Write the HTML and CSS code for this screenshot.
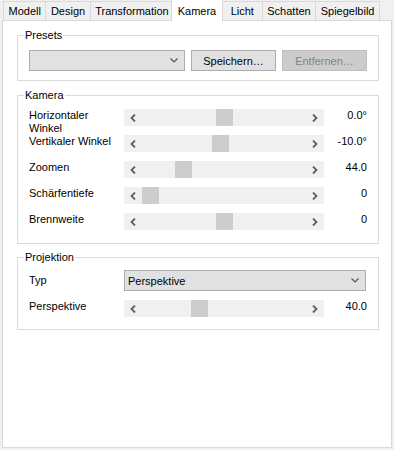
FILE: index.html
```html
<!DOCTYPE html>
<html lang="de">
<head>
  <meta charset="UTF-8">
  <meta name="viewport" content="width=device-width, initial-scale=1.0">
  <title>Kamera</title>
  <link rel="stylesheet" href="styles.css">
</head>
<body>
  <!-- Tab strip -->
  <div class="tabs">
    <div class="tab">Modell</div>
    <div class="tab">Design</div>
    <div class="tab">Transformation</div>
    <div class="tab active">Kamera</div>
    <div class="tab">Licht</div>
    <div class="tab">Schatten</div>
    <div class="tab">Spiegelbild</div>
  </div>

  <div class="panel">
    <!-- Presets -->
    <fieldset>
      <legend>Presets</legend>
      <div class="presetRow">
        <div class="combo presetCombo">
          <span></span>
          <svg class="chevron" width="8" height="5" viewBox="0 0 8 5"><polyline points="0.5,0.5 4,4 7.5,0.5" fill="none" stroke="#555" stroke-width="1.2"/></svg>
        </div>
        <button class="btn">Speichern…</button>
        <button class="btn disabled">Entfernen…</button>
      </div>
    </fieldset>

    <!-- Kamera -->
    <fieldset class="kamera">
      <legend>Kamera</legend>
      <div class="row">
        <div class="label">Horizontaler Winkel</div>
        <div class="slider">
          <svg width="6" height="8" viewBox="0 0 6 8"><polyline points="5,0.5 1.5,4 5,7.5" fill="none" stroke="#606060" stroke-width="1.8"/></svg>
          <div class="thumb" style="left: 92px"></div>
          <svg width="6" height="8" viewBox="0 0 6 8"><polyline points="1,0.5 4.5,4 1,7.5" fill="none" stroke="#606060" stroke-width="1.8"/></svg>
        </div>
        <div class="value">0.0°</div>
      </div>
      <div class="row">
        <div class="label">Vertikaler Winkel</div>
        <div class="slider">
          <svg width="6" height="8" viewBox="0 0 6 8"><polyline points="5,0.5 1.5,4 5,7.5" fill="none" stroke="#606060" stroke-width="1.8"/></svg>
          <div class="thumb" style="left: 88px"></div>
          <svg width="6" height="8" viewBox="0 0 6 8"><polyline points="1,0.5 4.5,4 1,7.5" fill="none" stroke="#606060" stroke-width="1.8"/></svg>
        </div>
        <div class="value">-10.0°</div>
      </div>
      <div class="row">
        <div class="label">Zoomen</div>
        <div class="slider">
          <svg width="6" height="8" viewBox="0 0 6 8"><polyline points="5,0.5 1.5,4 5,7.5" fill="none" stroke="#606060" stroke-width="1.8"/></svg>
          <div class="thumb" style="left: 51px"></div>
          <svg width="6" height="8" viewBox="0 0 6 8"><polyline points="1,0.5 4.5,4 1,7.5" fill="none" stroke="#606060" stroke-width="1.8"/></svg>
        </div>
        <div class="value">44.0</div>
      </div>
      <div class="row">
        <div class="label">Schärfentiefe</div>
        <div class="slider">
          <svg width="6" height="8" viewBox="0 0 6 8"><polyline points="5,0.5 1.5,4 5,7.5" fill="none" stroke="#606060" stroke-width="1.8"/></svg>
          <div class="thumb" style="left: 18px"></div>
          <svg width="6" height="8" viewBox="0 0 6 8"><polyline points="1,0.5 4.5,4 1,7.5" fill="none" stroke="#606060" stroke-width="1.8"/></svg>
        </div>
        <div class="value">0</div>
      </div>
      <div class="row">
        <div class="label">Brennweite</div>
        <div class="slider">
          <svg width="6" height="8" viewBox="0 0 6 8"><polyline points="5,0.5 1.5,4 5,7.5" fill="none" stroke="#606060" stroke-width="1.8"/></svg>
          <div class="thumb" style="left: 92px"></div>
          <svg width="6" height="8" viewBox="0 0 6 8"><polyline points="1,0.5 4.5,4 1,7.5" fill="none" stroke="#606060" stroke-width="1.8"/></svg>
        </div>
        <div class="value">0</div>
      </div>
    </fieldset>

    <!-- Projektion -->
    <fieldset class="projektion">
      <legend>Projektion</legend>
      <div class="row typRow">
        <div class="label">Typ</div>
        <div class="combo typCombo">
          <span>Perspektive</span>
          <svg class="chevron" width="8" height="5" viewBox="0 0 8 5"><polyline points="0.5,0.5 4,4 7.5,0.5" fill="none" stroke="#555" stroke-width="1.2"/></svg>
        </div>
      </div>
      <div class="row lastRow">
        <div class="label">Perspektive</div>
        <div class="slider">
          <svg width="6" height="8" viewBox="0 0 6 8"><polyline points="5,0.5 1.5,4 5,7.5" fill="none" stroke="#606060" stroke-width="1.8"/></svg>
          <div class="thumb" style="left: 67px"></div>
          <svg width="6" height="8" viewBox="0 0 6 8"><polyline points="1,0.5 4.5,4 1,7.5" fill="none" stroke="#606060" stroke-width="1.8"/></svg>
        </div>
        <div class="value">40.0</div>
      </div>
    </fieldset>
  </div>
</body>
</html>
```

FILE: styles.css
```css
body {
  margin: 0;
  background-color: #f0f0f0;
  font-family: "Liberation Sans", Arial, sans-serif;
  font-size: 11px;
  color: #000;
}


/* Tabs */
.tabs {
  display: flex;
  align-items: flex-end;
  height: 20px;
  padding-left: 3px;
}

.tab {
  position: relative;
  height: 18px;
  line-height: 18px;
  min-width: 30px;
  padding: 0 4.5px;
  margin-right: -1px;
  text-align: center;
  border: 1px solid #d9d9d9;
  border-bottom: none;
  background-color: #f0f0f0;
}

.tab.active {
  height: 21px;
  line-height: 22px;
  margin: 0 -1px -1px -2px;
  padding: 0 5.5px;
  background-color: #fff;
  z-index: 1;
}


/* Panel */
.panel {
  box-sizing: border-box;
  height: 428px;
  margin: 0 2px;
  padding: 8px 12px 0 14px;
  border: 1px solid #d9d9d9;
  background-color: #fff;
}

fieldset {
  margin: 0 0 8px;
  padding: 8px 11px 9px;
  border: 1px solid #dcdcdc;
  min-width: 0;
}

legend {
  padding: 0 1px;
  margin-left: -5px;
  line-height: 13px;
}

.kamera {
  padding-top: 7px;
  padding-bottom: 4px;
  margin-bottom: 7px;
}

.projektion {
  padding-top: 6px;
  padding-bottom: 12px;
}


/* Presets */
.presetRow {
  display: flex;
  gap: 6px;
}

.combo {
  box-sizing: border-box;
  display: flex;
  align-items: center;
  justify-content: space-between;
  height: 21px;
  padding: 0 6px 0 3px;
  border: 1px solid #adadad;
  background-color: #e1e1e1;
}

.presetCombo {
  width: 156px;
}

.typCombo {
  width: 242px;
}

.btn {
  box-sizing: border-box;
  width: 85px;
  height: 21px;
  padding: 0;
  font-family: inherit;
  font-size: 11px;
  color: #000;
  border: 1px solid #adadad;
  background-color: #e1e1e1;
}

.btn.disabled {
  color: #838383;
  border-color: #bfbfbf;
  background-color: #cccccc;
}


/* Slider rows */
.row {
  display: flex;
  align-items: flex-start;
  height: 26px;
}

.row .label {
  box-sizing: border-box;
  width: 95px;
  padding-right: 6px;
  line-height: 13px;
}

.typRow {
  height: 30px;
}

.typRow .label {
  line-height: 21px;
}

.lastRow {
  height: 17px;
}

.slider {
  position: relative;
  box-sizing: border-box;
  display: flex;
  align-items: center;
  justify-content: space-between;
  width: 200px;
  height: 17px;
  padding: 0 6px;
  background-color: #f0f0f0;
}

.thumb {
  position: absolute;
  top: 0;
  width: 17px;
  height: 17px;
  background-color: #cdcdcd;
}

.value {
  flex: 1;
  text-align: right;
  line-height: 13px;
}
```
